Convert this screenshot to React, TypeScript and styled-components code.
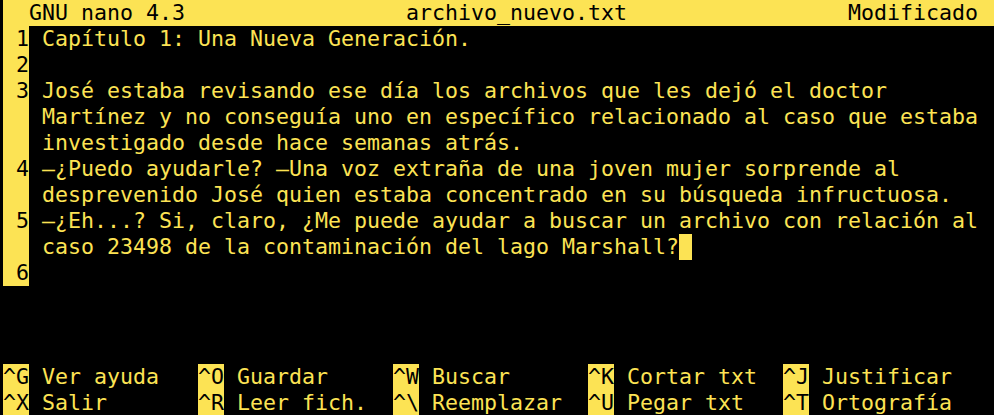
import React from 'react';
import styled, { createGlobalStyle } from 'styled-components';

const YELLOW = '#fce354';
const CELL = 13;
const ROW = 26;

const Global = createGlobalStyle`
  html, body {
    margin: 0;
    padding: 0;
    background: #000;
    overflow: hidden;
  }
`;

const Terminal = styled.div`
  width: 994px;
  height: 416px;
  box-sizing: border-box;
  padding-left: 3px;
  background: #000;
  color: ${YELLOW};
  font-family: 'DejaVu Sans Mono', 'Liberation Mono', monospace;
  font-size: 21.6px;
  line-height: ${ROW}px;
  white-space: pre;
  display: flex;
  flex-direction: column;
  overflow: hidden;
`;

const TitleBar = styled.div`
  height: ${ROW}px;
  background: ${YELLOW};
  color: #000;
  display: grid;
  grid-template-columns: ${31 * CELL}px ${34 * CELL}px 1fr;
`;

const Editor = styled.div`
  flex: 1;
  display: flex;
  flex-direction: column;
`;

const Row = styled.div`
  height: ${ROW}px;
  display: grid;
  grid-template-columns: ${2 * CELL}px ${CELL}px 1fr;
`;

const Gutter = styled.span`
  background: ${YELLOW};
  color: #000;
  text-align: right;
`;

const Cursor = styled.span`
  display: inline-block;
  width: ${CELL}px;
  height: ${ROW}px;
  vertical-align: top;
  background: ${YELLOW};
`;

const Shortcuts = styled.div`
  display: grid;
  grid-template-columns: repeat(5, ${15 * CELL}px);
  grid-auto-rows: ${ROW}px;
`;

const Shortcut = styled.div`
  display: flex;
`;

const Key = styled.span`
  background: ${YELLOW};
  color: #000;
  width: ${2 * CELL}px;
  margin-right: ${CELL}px;
`;

type Line = { num?: number; text: string; cursor?: boolean };

const lines: Line[] = [
  { num: 1, text: 'Capítulo 1: Una Nueva Generación.' },
  { num: 2, text: '' },
  { num: 3, text: 'José estaba revisando ese día los archivos que les dejó el doctor' },
  { text: 'Martínez y no conseguía uno en específico relacionado al caso que estaba' },
  { text: 'investigado desde hace semanas atrás.' },
  { num: 4, text: '—¿Puedo ayudarle? —Una voz extraña de una joven mujer sorprende al' },
  { text: 'desprevenido José quien estaba concentrado en su búsqueda infructuosa.' },
  { num: 5, text: '—¿Eh...? Si, claro, ¿Me puede ayudar a buscar un archivo con relación al' },
  { text: 'caso 23498 de la contaminación del lago Marshall?', cursor: true },
  { num: 6, text: '' },
];

const shortcuts: [string, string][] = [
  ['^G', 'Ver ayuda'],
  ['^O', 'Guardar'],
  ['^W', 'Buscar'],
  ['^K', 'Cortar txt'],
  ['^J', 'Justificar'],
  ['^X', 'Salir'],
  ['^R', 'Leer fich.'],
  ['^\\', 'Reemplazar'],
  ['^U', 'Pegar txt'],
  ['^T', 'Ortografía'],
];

export default function App() {
  return (
    <>
      <Global />
      <Terminal>
        <TitleBar>
          <span>{'  GNU nano 4.3'}</span>
          <span>archivo_nuevo.txt</span>
          <span>Modificado</span>
        </TitleBar>
        <Editor>
          {lines.map((l, i) => (
            <Row key={i}>
              <Gutter>{l.num !== undefined ? `${l.num}` : ''}</Gutter>
              <span />
              <span>
                {l.text}
                {l.cursor && <Cursor />}
              </span>
            </Row>
          ))}
        </Editor>
        <Shortcuts>
          {shortcuts.map(([k, label]) => (
            <Shortcut key={k}>
              <Key>{k}</Key>
              <span>{label}</span>
            </Shortcut>
          ))}
        </Shortcuts>
      </Terminal>
    </>
  );
}
